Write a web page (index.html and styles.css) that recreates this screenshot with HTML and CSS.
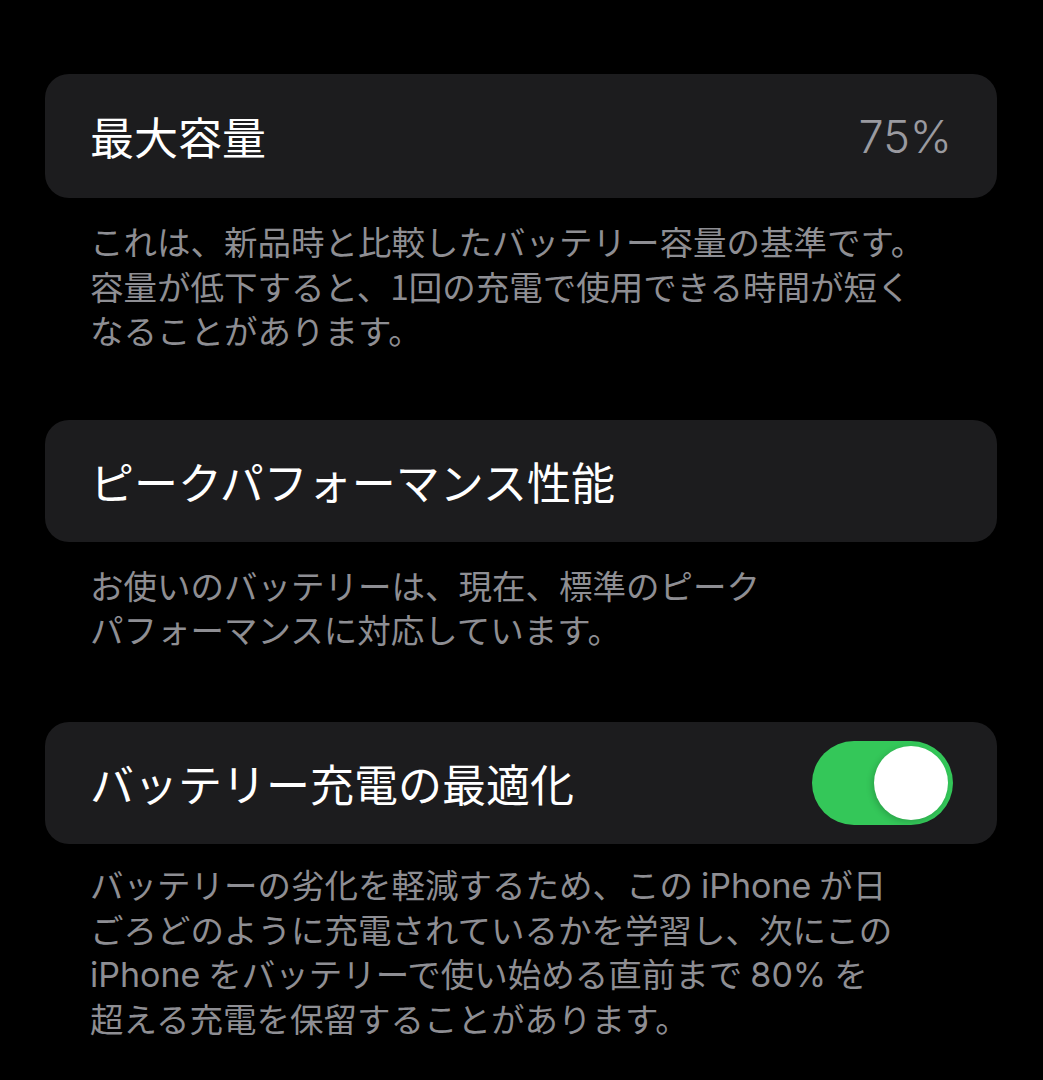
FILE: index.html
```html
<!DOCTYPE html>
<html lang="ja">
<head>
<meta charset="utf-8">
<link rel="stylesheet" href="styles.css">
</head>
<body>
<main class="page">
  <section class="group">
    <div class="card">
      <span class="title">最大容量</span>
      <span class="value">75%</span>
    </div>
    <p class="footer">これは、新品時と比較したバッテリー容量の基準です。<br>容量が低下すると、1回の充電で使用できる時間が短く<br>なることがあります。</p>
  </section>
  <section class="group">
    <div class="card">
      <span class="title">ピークパフォーマンス性能</span>
    </div>
    <p class="footer">お使いのバッテリーは、現在、標準のピーク<br>パフォーマンスに対応しています。</p>
  </section>
  <section class="group">
    <div class="card">
      <span class="title">バッテリー充電の最適化</span>
      <span class="toggle"><span class="knob"></span></span>
    </div>
    <p class="footer">バッテリーの劣化を軽減するため、この<span class="latin">iPhone</span>が日<br>ごろどのように充電されているかを学習し、次にこの<br><span class="latin first">iPhone</span>をバッテリーで使い始める直前まで<span class="latin">80%</span>を<br>超える充電を保留することがあります。</p>
  </section>
</main>
</body>
</html>
```

FILE: styles.css
```css
html, body {
  margin: 0;
  padding: 0;
  background: #000;
}
body {
  font-family: "Noto Sans CJK JP", "Noto Sans", sans-serif;
  color: #fff;
}
.page {
  padding: 74px 46px 0 45px;
  display: flex;
  flex-direction: column;
}
.group {
  display: flex;
  flex-direction: column;
}
.card {
  background: #1c1c1e;
  border-radius: 24px;
  height: 122px;
  padding: 0 44px 0 45px;
  display: flex;
  align-items: center;
  justify-content: space-between;
}
.group:first-child .card {
  height: 124px;
}
.title {
  font-size: 44px;
  line-height: 1;
  color: #fff;
}
.value {
  font-family: "Inter", "Liberation Sans", sans-serif;
  font-size: 45px;
  font-weight: 300;
  color: #9a9aa0;
  line-height: 1;
  margin-right: 1px;
}
.footer {
  margin: 0;
  padding: 21px 0 0 45px;
  font-size: 33.5px;
  line-height: 44.6px;
  color: #8e8e93;
}
.group:nth-child(1) .footer { padding-bottom: 67px; }
.group:nth-child(2) .footer { padding-bottom: 70px; }
.group:nth-child(3) .footer { padding-top: 18px; }
.latin {
  font-family: "Inter", "Liberation Sans", sans-serif;
  font-size: 34px;
  line-height: 1;
  margin: 0 8px;
}
.latin.first {
  margin-left: 0;
}
.toggle {
  width: 141px;
  height: 84px;
  border-radius: 42px;
  background: #34c759;
  display: flex;
  align-items: center;
  justify-content: flex-end;
  padding-right: 5px;
  box-sizing: border-box;
}
.knob {
  width: 74px;
  height: 74px;
  border-radius: 50%;
  background: #fff;
  box-shadow: -2px 2px 6px rgba(0, 0, 0, 0.18);
}
```
